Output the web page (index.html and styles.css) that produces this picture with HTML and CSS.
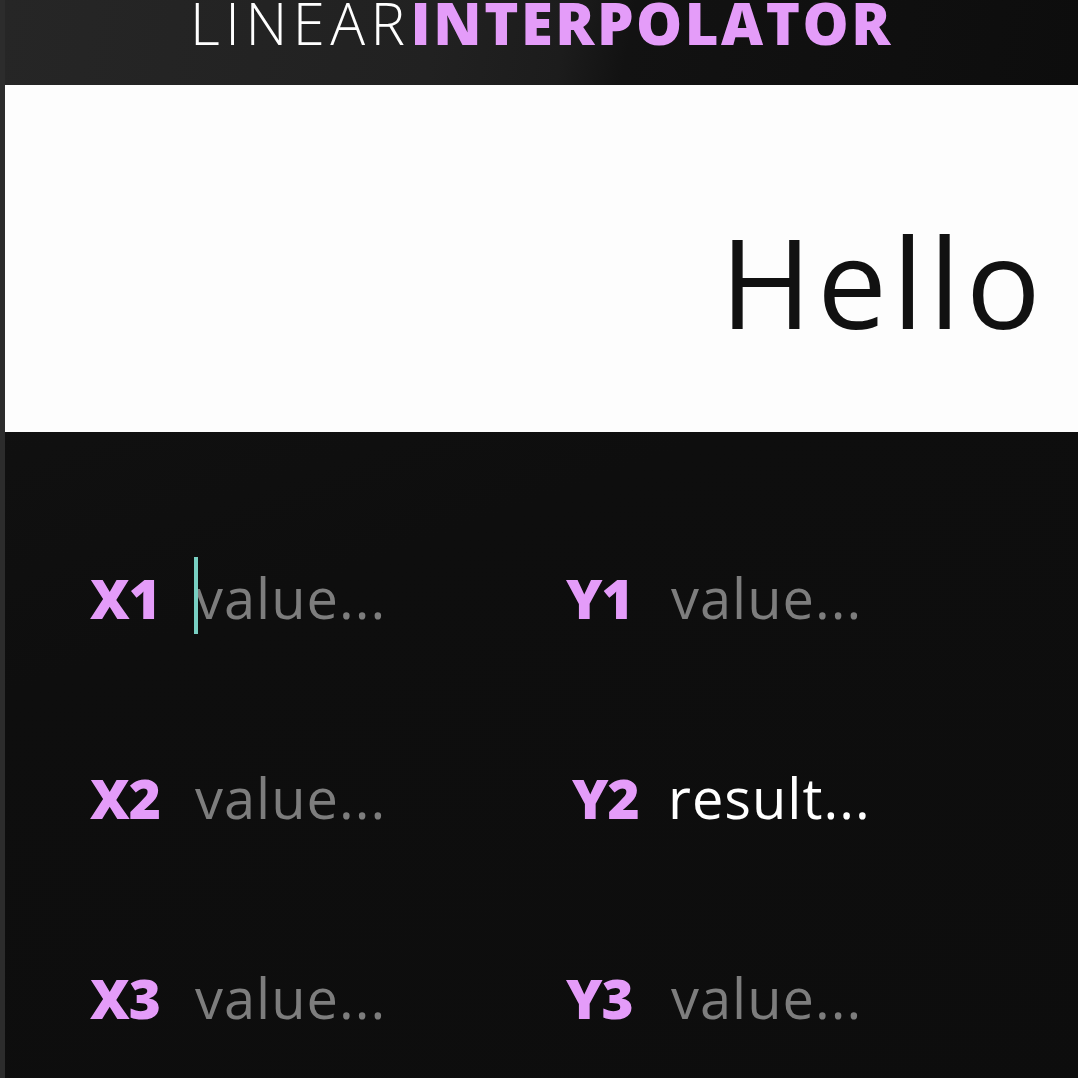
FILE: index.html
```html
<!DOCTYPE html>
<html lang="en">
<head>
<meta charset="utf-8">
<title>Linear Interpolator</title>
<link rel="stylesheet" href="styles.css">
</head>
<body>
<div class="app">
  <header class="header">
    <h1 class="title"><span class="light">LINEAR</span><span class="bold">INTERPOLATOR</span></h1>
  </header>
  <section class="display">
    <div class="hello">Hello</div>
  </section>
  <main class="panel">
    <div class="grid">
      <div class="cell"><span class="label">X1</span><span class="input focused"><span class="caret"></span>value...</span></div>
      <div class="cell"><span class="label">Y1</span><span class="input">value...</span></div>
      <div class="cell"><span class="label">X2</span><span class="input">value...</span></div>
      <div class="cell cell-y2"><span class="label">Y2</span><span class="input result">result...</span></div>
      <div class="cell"><span class="label">X3</span><span class="input">value...</span></div>
      <div class="cell"><span class="label">Y3</span><span class="input">value...</span></div>
    </div>
  </main>
</div>
</body>
</html>
```

FILE: styles.css
```css
html, body {
  margin: 0;
  padding: 0;
  background: #0e0e0e;
}
body {
  font-family: "Open Sans", "DejaVu Sans", sans-serif;
  overflow: hidden;
}
.app {
  border-left: 5px solid #2c2c2c;
  min-height: 1078px;
  background: linear-gradient(160deg, #141414 0%, #101010 30%, #0e0e0e 45%, #0d0d0d 100%);
}
.header {
  height: 85px;
  display: flex;
  justify-content: center;
  align-items: flex-end;
  background: linear-gradient(100deg, #262626 0%, #212121 40%, #1c1c1c 52%, #121212 58%, #0d0d0d 100%);
  overflow: hidden;
}
.title {
  margin: 0 0 33px 0;
  font-size: 58px;
  line-height: 58px;
  white-space: nowrap;
}
.light {
  color: #ffffff;
  font-weight: 300;
  letter-spacing: 5.5px;
}
.bold {
  color: #e49cf9;
  font-weight: 800;
  letter-spacing: 2.5px;
}
.display {
  height: 347px;
  background: #fdfdfd;
  display: flex;
  justify-content: flex-end;
  align-items: center;
  padding-right: 32px;
}
.hello {
  font-size: 124px;
  font-weight: 400;
  letter-spacing: 5.5px;
  color: #111111;
  line-height: 1;
  margin-top: 44px;
}
.panel {
  padding: 125px 0 0 85px;
}
.grid {
  display: grid;
  grid-template-columns: 476px 476px;
  grid-auto-rows: 200px;
}
.cell {
  display: flex;
  align-items: baseline;
  height: 80px;
}
.label {
  width: 105px;
  font-size: 55px;
  font-weight: 800;
  letter-spacing: -1px;
  color: #e49cf9;
  line-height: 80px;
}
.cell-y2 .label {
  padding-left: 6px;
  width: 96px;
}
.input {
  position: relative;
  font-size: 56px;
  font-weight: 400;
  letter-spacing: 1px;
  color: #7d7d7d;
  line-height: 80px;
}
.result {
  color: #ffffff;
}
.caret {
  position: absolute;
  left: -1px;
  top: 0;
  width: 4px;
  height: 77px;
  background: #78cfc2;
}
```
